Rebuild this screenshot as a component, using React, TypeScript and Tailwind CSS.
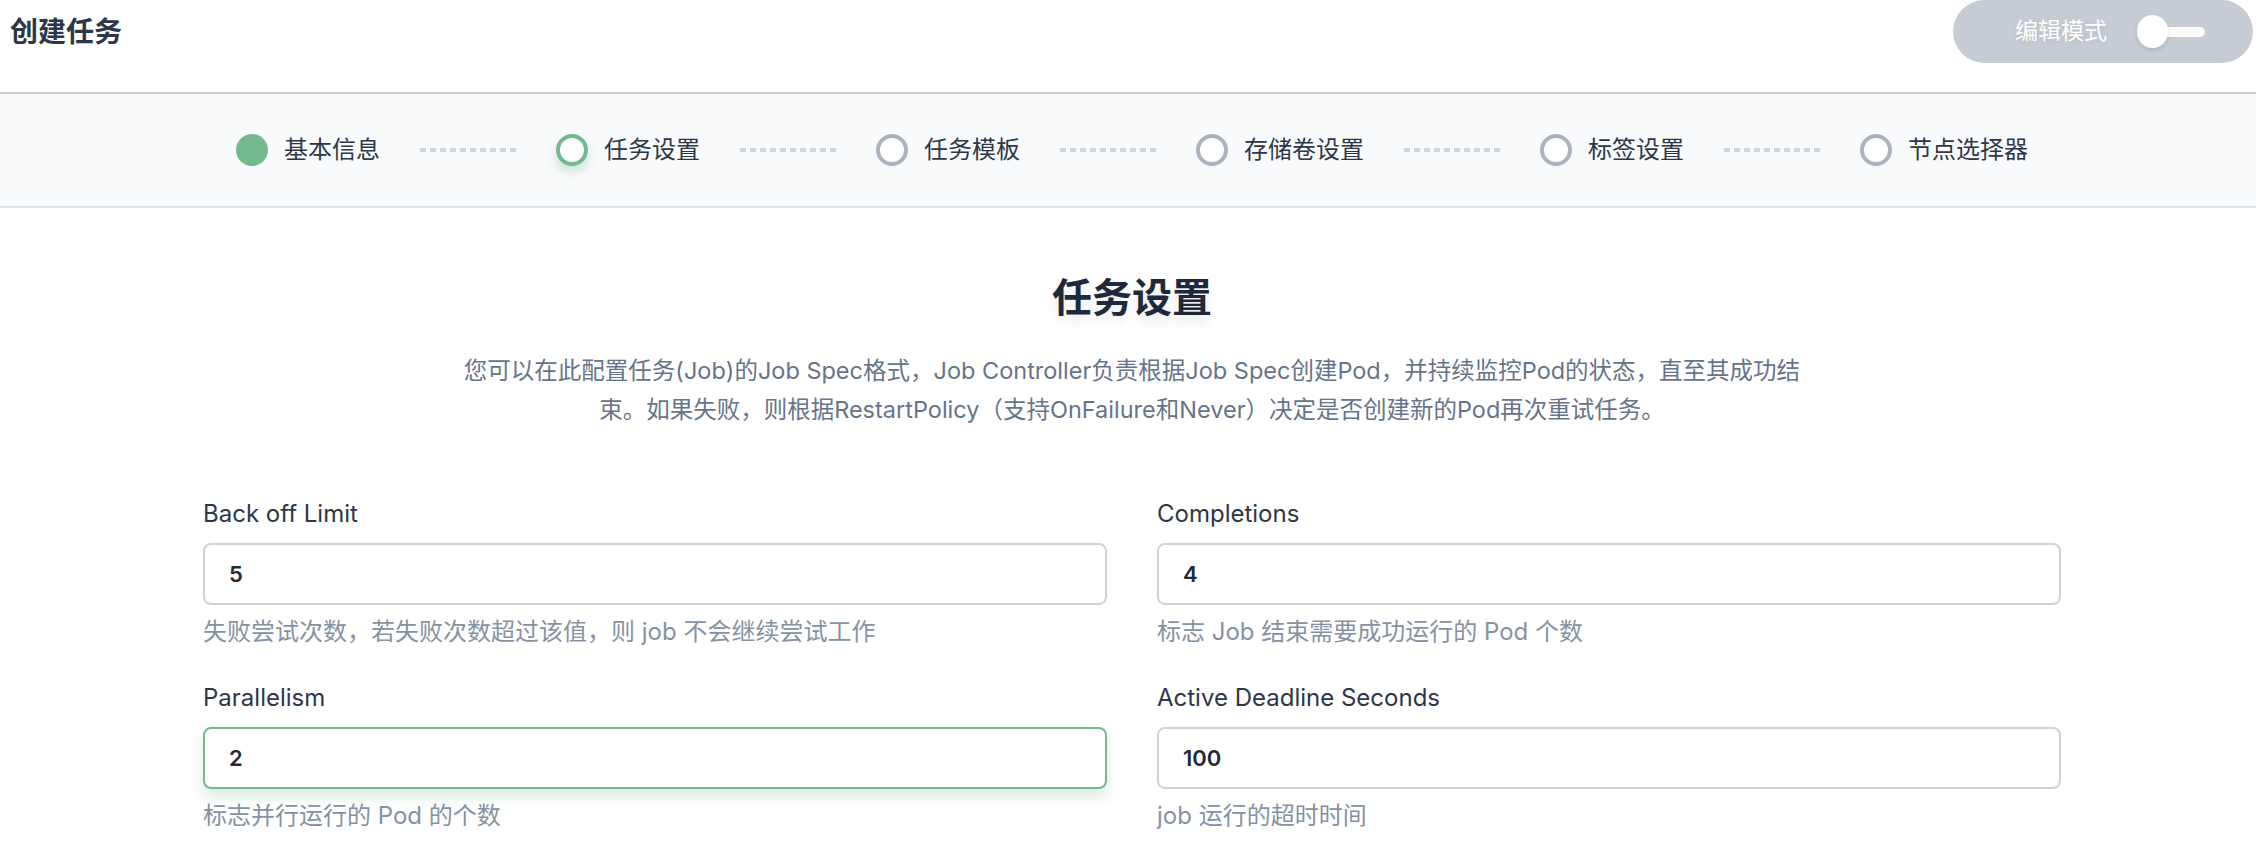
import React from 'react';

const steps = [
  { label: '基本信息', state: 'done' },
  { label: '任务设置', state: 'active' },
  { label: '任务模板', state: 'todo' },
  { label: '存储卷设置', state: 'todo' },
  { label: '标签设置', state: 'todo' },
  { label: '节点选择器', state: 'todo' },
];

const fields = [
  { label: 'Back off Limit', value: '5', help: '失败尝试次数，若失败次数超过该值，则 job 不会继续尝试工作' },
  { label: 'Completions', value: '4', help: '标志 Job 结束需要成功运行的 Pod 个数' },
  { label: 'Parallelism', value: '2', help: '标志并行运行的 Pod 的个数', focused: true },
  { label: 'Active Deadline Seconds', value: '100', help: 'job 运行的超时时间' },
];

const StepDot = ({ state }: { state: string }) => {
  if (state === 'done') return <span className="w-[32px] h-[32px] rounded-full bg-[#72b98e] shrink-0" />;
  if (state === 'active')
    return (
      <span className="w-[32px] h-[32px] rounded-full bg-white border-[4px] border-[#72b98e] shadow-[0_6px_10px_rgba(114,185,142,0.35)] shrink-0" />
    );
  return <span className="w-[32px] h-[32px] rounded-full bg-white border-[4px] border-[#a9b2be] shrink-0" />;
};

const App: React.FC = () => {
  return (
    <div className="min-h-screen bg-white font-['Inter','Noto_Sans_CJK_SC',sans-serif] text-[#2d3748]">
      {/* header */}
      <header className="h-[92px] flex items-start justify-between border-b-2 border-[#c9cfd6] box-content">
        <h1 className="mt-[14px] ml-[10px] text-[28px] leading-[36px] font-semibold text-[#2d3748]">创建任务</h1>
        <div className="mr-[3px] w-[300px] h-[63px] rounded-full bg-[#c5ccd4] flex items-center pl-[62px]">
          <span className="text-[23px] leading-none text-white [text-shadow:0_2px_6px_rgba(0,0,0,0.08)]">编辑模式</span>
          <div className="ml-[30px] relative flex items-center">
            <span className="w-[31px] h-[33px] rounded-full bg-white shadow-[0_2px_4px_rgba(0,0,0,0.12)] z-10" />
            <span className="-ml-[18px] w-[55px] h-[10px] rounded-full bg-white" />
          </div>
        </div>
      </header>

      {/* steps */}
      <nav className="h-[112px] bg-[#f9fafc] border-b-2 border-[#dfe3e8] box-content flex items-center justify-center pl-[8px]">
        {steps.map((s, i) => (
          <React.Fragment key={s.label}>
            {i > 0 && (
              <span className="mx-[40px] w-[96px] h-[4px] bg-[repeating-linear-gradient(to_right,#cfd5dc_0_6px,transparent_6px_10px)]" />
            )}
            <div className="flex items-center gap-[16px]">
              <StepDot state={s.state} />
              <span className="text-[24px] leading-none whitespace-nowrap text-[#2d3748]">{s.label}</span>
            </div>
          </React.Fragment>
        ))}
      </nav>

      {/* content */}
      <main className="pl-[8px] pt-[66px] pb-10">
        <div className="text-center">
          <h2 className="text-[40px] leading-[48px] font-bold text-[#1e293b] [text-shadow:0_8px_10px_rgba(0,0,0,0.08)]">任务设置</h2>
          <p className="mt-[29px] text-[23.5px] leading-[39px] text-[#667489]">
            您可以在此配置任务(Job)的Job Spec格式，Job Controller负责根据Job Spec创建Pod，并持续监控Pod的状态，直至其成功结
            <br />
            束。如果失败，则根据RestartPolicy（支持OnFailure和Never）决定是否创建新的Pod再次重试任务。
          </p>
        </div>

        <div className="mt-[70px] mx-auto w-[1858px] grid grid-cols-2 gap-x-[50px] gap-y-[36px]">
          {fields.map((f) => (
            <div key={f.label} className="flex flex-col">
              <label className="text-[24px] leading-[30px] text-[#2d3748]">{f.label}</label>
              <input
                readOnly
                value={f.value}
                className={
                  f.focused
                    ? 'mt-[14px] h-[62px] rounded-[8px] border-2 border-[#72b98e] bg-white px-[24px] text-[22px] font-semibold text-[#1f2937] outline-none shadow-[0_8px_14px_rgba(114,185,142,0.28)]'
                    : 'mt-[14px] h-[62px] rounded-[8px] border-2 border-[#cdd3da] bg-white px-[24px] text-[22px] font-semibold text-[#1f2937] outline-none'
                }
              />
              <p className="mt-[12px] text-[24px] leading-[30px] text-[#8592a3]">{f.help}</p>
            </div>
          ))}
        </div>
      </main>
    </div>
  );
};

export default App;
